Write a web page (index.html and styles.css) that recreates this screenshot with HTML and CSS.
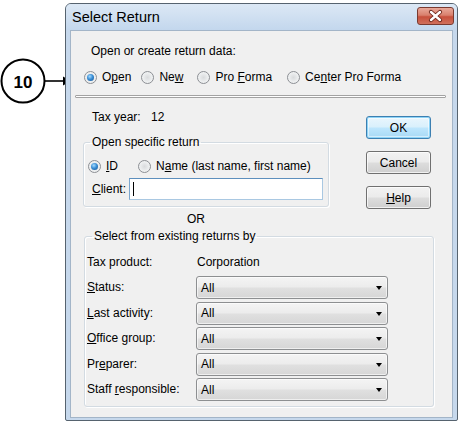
FILE: index.html
```html
<!DOCTYPE html>
<html>
<head>
<meta charset="utf-8">
<link rel="stylesheet" href="styles.css">
</head>
<body>
<div class="stage">
  <svg class="callout" width="74" height="46" viewBox="0 0 74 46">
    <circle cx="23" cy="23" r="21.5" fill="#fff" stroke="#000" stroke-width="2"/>
    <text x="23" y="29.5" text-anchor="middle" class="callout-num">10</text>
    <line x1="45" y1="23" x2="65" y2="23" stroke="#000" stroke-width="1.6"/>
    <polygon points="71,23 63,18.5 63,27.5" fill="#000"/>
  </svg>
  <div class="window">
    <div class="titlebar">
      <span class="title">Select Return</span>
      <span class="close">
        <svg width="37" height="18" viewBox="0 0 37 18">
          <path d="M14 5 L23 13 M23 5 L14 13" stroke="#6b2419" stroke-width="4.2" stroke-linecap="round"/>
          <path d="M14 5 L23 13 M23 5 L14 13" stroke="#fff" stroke-width="2.4" stroke-linecap="round"/>
        </svg>
      </span>
    </div>
    <div class="content">
      <div class="prompt">Open or create return data:</div>
      <div class="modes">
        <span class="opt o-open"><span class="radio on"></span><span>O<u>p</u>en</span></span>
        <span class="opt o-new"><span class="radio"></span><span>Ne<u>w</u></span></span>
        <span class="opt o-pro"><span class="radio"></span><span>Pro <u>F</u>orma</span></span>
        <span class="opt o-center"><span class="radio"></span><span>Ce<u>n</u>ter Pro Forma</span></span>
      </div>
      <div class="sep"></div>
      <div class="middle">
        <div class="left">
          <div class="taxyear"><span class="ty-label">Tax year:</span><span>12</span></div>
          <fieldset class="group g1">
            <legend>Open specific return</legend>
            <div class="idrow">
              <span class="opt o-id"><span class="radio on"></span><span><u>I</u>D</span></span>
              <span class="opt"><span class="radio"></span><span>N<u>a</u>me (last name, first name)</span></span>
            </div>
            <div class="clientrow">
              <span class="client-label"><u>C</u>lient:</span>
              <div class="input"><span class="caret"></span></div>
            </div>
          </fieldset>
        </div>
        <div class="buttons">
          <div class="btn default">OK</div>
          <div class="btn">Cancel</div>
          <div class="btn"><u>H</u>elp</div>
        </div>
      </div>
      <div class="or">OR</div>
      <fieldset class="group g2">
        <legend>Select from existing returns by</legend>
        <div class="grid">
          <span class="lbl">Tax product:</span><span class="val">Corporation</span>
          <span class="lbl"><u>S</u>tatus:</span><div class="combo"><span>All</span><i class="arrow"></i></div>
          <span class="lbl"><u>L</u>ast activity:</span><div class="combo"><span>All</span><i class="arrow"></i></div>
          <span class="lbl"><u>O</u>ffice group:</span><div class="combo"><span>All</span><i class="arrow"></i></div>
          <span class="lbl">Pr<u>e</u>parer:</span><div class="combo"><span>All</span><i class="arrow"></i></div>
          <span class="lbl">Staff <u>r</u>esponsible:</span><div class="combo"><span>All</span><i class="arrow"></i></div>
        </div>
      </fieldset>
    </div>
  </div>
</div>
</body>
</html>
```
FILE: styles.css
```css
html, body {
  margin: 0;
  padding: 0;
  background: #ffffff;
}
body {
  font-family: "Liberation Sans", Arial, sans-serif;
  font-size: 12px;
  color: #000;
}
.stage {
  position: relative;
  width: 463px;
  height: 423px;
  overflow: hidden;
}
.callout {
  position: absolute;
  left: 0;
  top: 58px;
}
.callout-num {
  font-family: "Liberation Sans", Arial, sans-serif;
  font-weight: bold;
  font-size: 17px;
}
.window {
  margin-left: 65px;
  position: relative;
  top: 3px;
  width: 393px;
  height: 418px;
  box-sizing: border-box;
  border: 1px solid #56636f;
  border-radius: 6px 6px 2px 2px;
  background: #c6d8ec;
  display: flex;
  flex-direction: column;
}
.titlebar {
  height: 26px;
  flex: none;
  display: flex;
  align-items: flex-start;
  padding: 0 3px 0 6px;
  background: linear-gradient(#dce8f5, #c3d7ed);
  border-radius: 5px 5px 0 0;
}
.title {
  font-size: 14.5px;
  line-height: 27px;
  color: #000;
}
.close {
  margin-left: auto;
  margin-top: 3px;
  width: 37px;
  height: 18px;
  box-sizing: border-box;
  border: 1px solid #7a3a30;
  border-radius: 3px;
  background: linear-gradient(#e9a99a 0%, #d9806d 45%, #c7503c 55%, #d0705c 100%);
  display: flex;
}
.close svg {
  margin: -1px;
}
.content {
  margin: 0 4px;
  height: 388px;
  box-sizing: border-box;
  border: 1px solid #a3b5c8;
  background: #f0f0f0;
  display: flex;
  flex-direction: column;
}
.prompt {
  margin: 14px 0 0 20px;
  line-height: 13px;
}
.modes {
  margin-top: 12px;
  height: 14px;
  padding-left: 13px;
  display: flex;
  align-items: center;
}
.opt {
  display: inline-flex;
  align-items: center;
  gap: 5px;
  line-height: 13px;
}
.o-open { margin-right: 10px; }
.o-new { margin-right: 14px; }
.o-pro { margin-right: 15px; }
.radio {
  width: 13px;
  height: 13px;
  box-sizing: border-box;
  border-radius: 50%;
  border: 1px solid #8c8f94;
  background: radial-gradient(circle at 50% 50%, #d9dbdd 0%, #eceeef 55%, #f7f7f7 100%);
  display: flex;
  align-items: center;
  justify-content: center;
  flex: none;
}
.radio.on::after {
  content: "";
  width: 7px;
  height: 7px;
  border-radius: 50%;
  background: radial-gradient(circle at 40% 35%, #a6dbff 0%, #3a8fd6 45%, #14508f 100%);
}
.sep {
  margin: 11px 6px 0 4px;
  height: 1px;
  border: 1px solid #a2a2a2;
  border-radius: 1px;
  background: #ffffff;
}
.middle {
  display: flex;
  align-items: flex-start;
}
.left {
  margin-left: 12px;
  width: 246px;
}
.taxyear {
  margin-top: 13px;
  padding-left: 9px;
  line-height: 13px;
  display: flex;
}
.ty-label {
  width: 59px;
}
.group {
  margin: 0;
  padding: 0;
  border: 1px solid #d3dbe2;
  border-radius: 3px;
  box-shadow: inset 1px 1px 0 #ffffff, 1px 1px 0 #ffffff;
  min-width: 0;
}
.group legend {
  padding: 0 2px;
  line-height: 13px;
  font-size: 12px;
}
.g1 {
  margin-top: 12px;
  padding: 10px 4px 6px 4px;
}
.g1 legend {
  margin-left: 2px;
}
.idrow {
  height: 14px;
  display: flex;
  align-items: center;
  gap: 0;
}
.o-id {
  margin-right: 20px;
}
.clientrow {
  margin-top: 5px;
  display: flex;
  align-items: center;
}
.client-label {
  padding-left: 4px;
  width: 37px;
}
.input {
  width: 194px;
  height: 22px;
  box-sizing: border-box;
  background: #ffffff;
  border: 1px solid #a9c8e2;
  border-top-color: #5d8fbd;
  border-left-color: #7aa6cf;
  display: flex;
  align-items: center;
  padding-left: 3px;
}
.caret {
  width: 1px;
  height: 14px;
  background: #000;
}
.buttons {
  margin-left: 37px;
  margin-top: 18px;
  display: flex;
  flex-direction: column;
  gap: 12px;
}
.btn {
  width: 65px;
  height: 23px;
  box-sizing: border-box;
  border: 1px solid #707070;
  border-radius: 3px;
  background: linear-gradient(#f2f2f2 0%, #ebebeb 48%, #dddddd 52%, #cfcfcf 100%);
  box-shadow: inset 0 0 0 1px rgba(255,255,255,0.7);
  display: flex;
  align-items: center;
  justify-content: center;
  font-size: 12px;
}
.btn.default {
  border-color: #3c7fb1;
  background: linear-gradient(#eaf6fd 0%, #d9f0fc 48%, #bee6fd 52%, #a7d9f5 100%);
  box-shadow: inset 0 0 0 1px #8ed4f7, inset 0 0 0 2px rgba(255,255,255,0.5);
}
.or {
  margin: 4px 0 0 116px;
  line-height: 13px;
}
.g2 {
  margin: 4px 0 0 13px;
  width: 350px;
  box-sizing: border-box;
  padding: 7.5px 0 5px 2px;
}
.g2 legend {
  margin-left: 5px;
}
.grid {
  display: grid;
  grid-template-columns: 109px 192px;
  grid-auto-rows: 23px;
  row-gap: 2.5px;
  align-items: center;
}
.lbl, .val {
  line-height: 13px;
}
.val {
  padding-left: 1px;
}
.combo {
  height: 23px;
  box-sizing: border-box;
  border: 1px solid #8d8f91;
  border-radius: 3px;
  background: linear-gradient(#f4f4f4 0%, #ececec 48%, #e0e0e0 52%, #d6d6d6 100%);
  box-shadow: inset 0 0 0 1px rgba(255,255,255,0.6);
  display: flex;
  align-items: center;
  padding: 0 5px 0 4px;
}
.arrow {
  margin-left: auto;
  width: 0;
  height: 0;
  border-left: 3.5px solid transparent;
  border-right: 3.5px solid transparent;
  border-top: 4px solid #000;
  margin-top: 1px;
}
u {
  text-decoration: underline;
  text-underline-offset: 1px;
}
```
